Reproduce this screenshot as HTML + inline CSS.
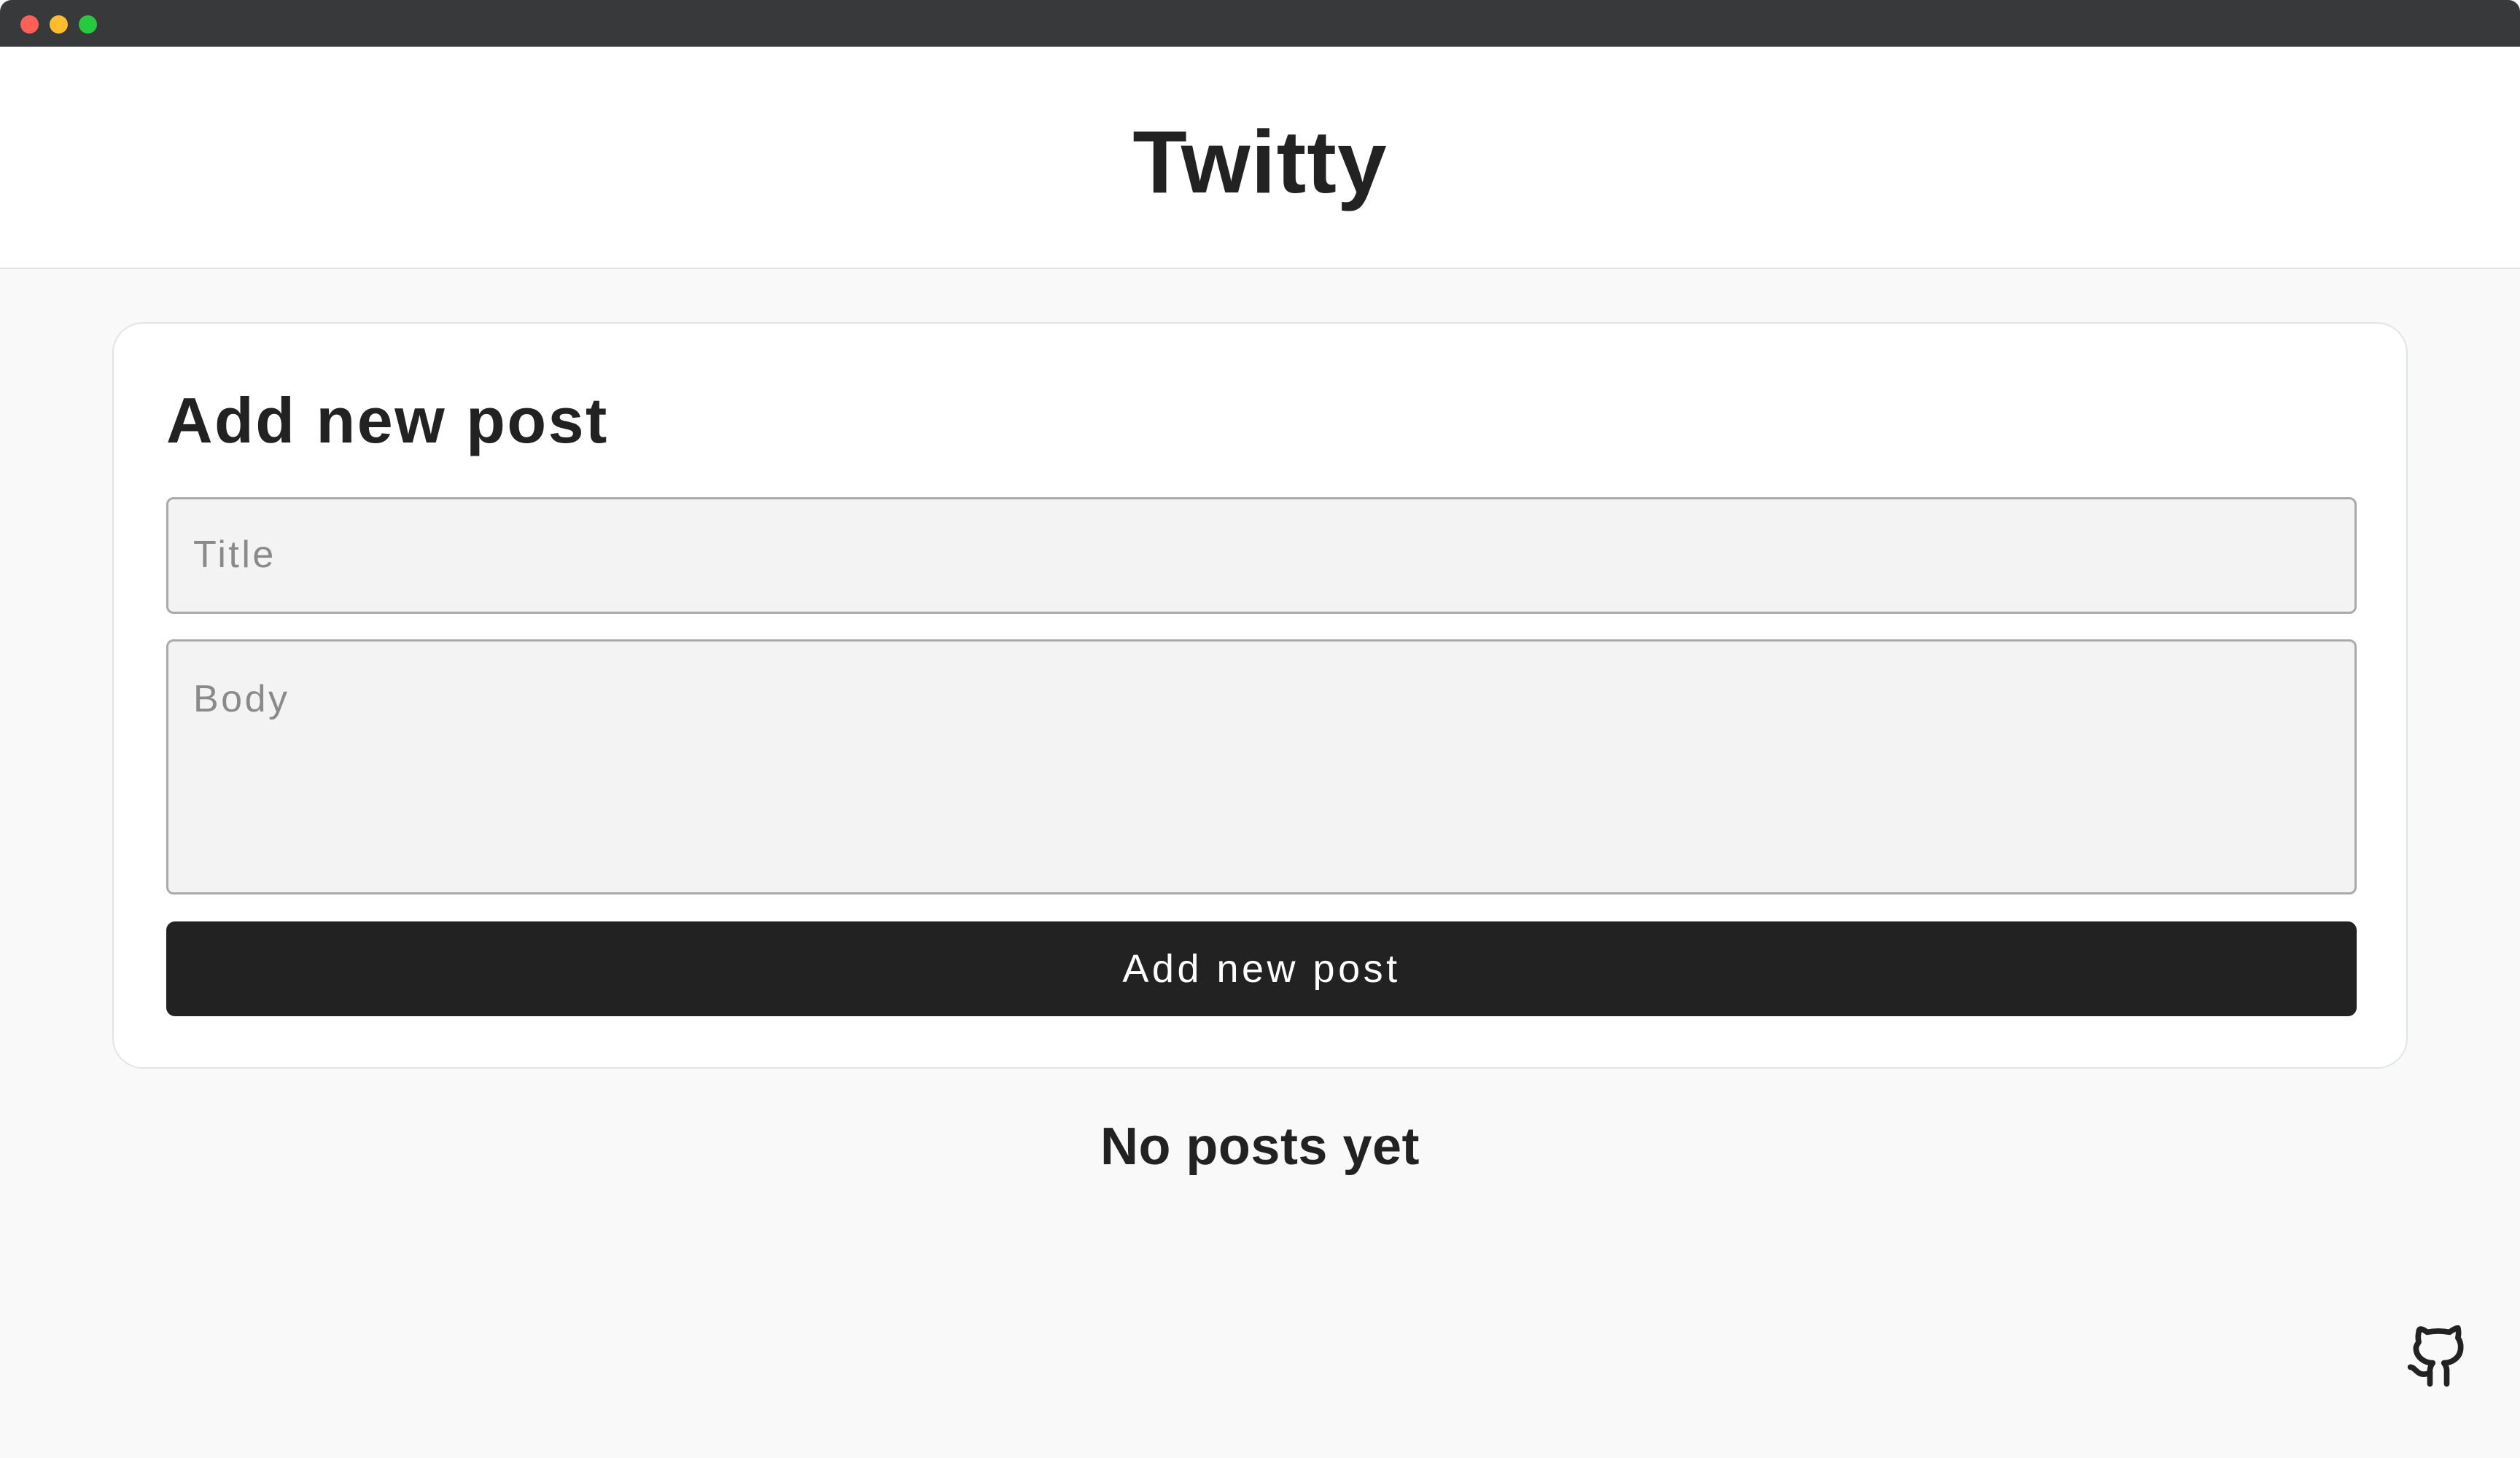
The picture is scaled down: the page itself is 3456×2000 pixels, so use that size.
<!DOCTYPE html>
<html><head><meta charset="utf-8"><style>
*{box-sizing:border-box;margin:0;padding:0}
body{width:3456px;height:2000px;background:#f9f9f9;font-family:"Liberation Sans",sans-serif;position:relative;overflow:hidden;color:#222}
.bar{position:absolute;left:0;top:0;width:3456px;height:64px;background:#38393b;border-radius:16px 16px 0 0}
.dot{position:absolute;top:21px;width:25px;height:25px;border-radius:50%}
header{position:absolute;top:64px;left:0;width:3456px;height:305px;background:#fff;border-bottom:2px solid #e3e6e6}
h1{position:absolute;left:0;right:0;top:88px;text-align:center;font-size:122px;font-weight:700;letter-spacing:1px}
.card{position:absolute;left:154px;top:442px;width:3148px;height:1024px;background:#fff;border:2px solid #dfe6e6;border-radius:42px}
h2{position:absolute;left:72px;top:82px;font-size:88px;font-weight:700;letter-spacing:2.5px}
.inp{position:absolute;left:72px;width:3004px;background:#f3f3f3;border:3px solid #aaa;border-radius:10px;font-size:52px;color:#8a8a8a;padding-left:34px;letter-spacing:3.5px}
.btn{position:absolute;left:72px;top:820px;width:3004px;height:130px;background:#222;border-radius:12px;color:#fff;font-size:54px;text-align:center;line-height:130px;letter-spacing:4.5px}
.none{position:absolute;left:0;right:0;top:1532px;text-align:center;font-size:72px;font-weight:700;letter-spacing:0.5px}
</style></head><body>
<div class="bar"><div class="dot" style="left:28px;background:#fe5f57"></div><div class="dot" style="left:68px;background:#febc2e"></div><div class="dot" style="left:108px;background:#28c840"></div></div>
<header><h1>Twitty</h1></header>
<div class="card">
<h2>Add new post</h2>
<div class="inp" style="top:238px;height:160px;line-height:152px">Title</div>
<div class="inp" style="top:433px;height:350px;padding-top:49px">Body</div>
<div class="btn">Add new post</div>
</div>
<div class="none">No posts yet</div>
<svg style="position:absolute;left:3298px;top:1814px" width="92" height="92" viewBox="0 0 24 24" fill="none" stroke="#222" stroke-width="2" stroke-linecap="round" stroke-linejoin="round"><path d="M15 22v-4a4.8 4.8 0 0 0-1-3.5c3 0 6-2 6-5.5.08-1.25-.27-2.48-1-3.5.28-1.15.28-2.350 0-3.5 0 0-1 0-3 1.5-2.64-.5-5.36-.5-8 0C6 2 5 2 5 3.5c-.3 1.15-.3 2.35 0 3.5A5.403 5.403 0 0 0 4 9c0 3.5 3 5.5 6 5.5-.39.49-.68 1.05-.85 1.65-.17.6-.22 1.23-.15 1.85v4"/><path d="M9 18c-4.51 2-5-2-7-2"/></svg>
</body></html>
